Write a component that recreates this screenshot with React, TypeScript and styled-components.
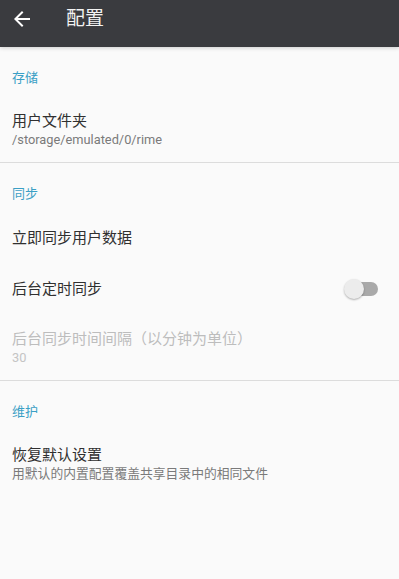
import React from "react";
import styled, { createGlobalStyle } from "styled-components";

const Global = createGlobalStyle`
  html, body { margin: 0; padding: 0; background: #fafafa; }
  body { font-family: Roboto, "Noto Sans CJK SC", sans-serif; -webkit-font-smoothing: antialiased; }
  #root { min-height: 579px; background: #fafafa; }
`;

const Page = styled.div`
  width: 399px;
  min-height: 579px;
  background: #fafafa;
  display: flex;
  flex-direction: column;
`;

const Toolbar = styled.header`
  height: 47px;
  box-sizing: border-box;
  background: #3a3b3f;
  display: flex;
  align-items: flex-start;
  padding: 7px 0 0 10px;
  gap: 32px;
  box-shadow: 0 1px 4px rgba(0, 0, 0, 0.18);
  position: relative;
  z-index: 1;
`;

const BackButton = styled.button`
  width: 24px;
  height: 24px;
  padding: 0;
  border: 0;
  background: none;
  display: flex;
  align-items: center;
  justify-content: center;
  color: #fff;
`;

const Title = styled.h1`
  margin: 0;
  font-size: 19px;
  line-height: 26px;
  font-weight: 400;
  color: #f2f2f2;
  margin-top: -1px;
`;

const List = styled.main`
  display: flex;
  flex-direction: column;
`;

const Category = styled.div`
  padding: 23px 12px 10px;
  font-size: 13px;
  line-height: 16px;
  color: #3a9fc5;
`;

const Item = styled.div<{ $twoLine?: boolean }>`
  box-sizing: border-box;
  display: flex;
  align-items: center;
  justify-content: space-between;
  padding: ${(p) => (p.$twoLine ? "15px 21px 14px 12px" : "0 21px 0 12px")};
  min-height: ${(p) => (p.$twoLine ? "66px" : "51px")};
`;

const TextCol = styled.div`
  display: flex;
  flex-direction: column;
`;

const ItemTitle = styled.div<{ $disabled?: boolean }>`
  font-size: 15px;
  line-height: 20px;
  color: ${(p) => (p.$disabled ? "#bdbdbd" : "#303030")};
`;

const ItemSummary = styled.div<{ $disabled?: boolean }>`
  font-size: 12.8px;
  line-height: 17px;
  color: ${(p) => (p.$disabled ? "#c4c4c4" : "#7a7a7a")};
`;

const Divider = styled.div`
  height: 1px;
  background: #dcdcdc;
`;

const Switch = styled.div`
  position: relative;
  width: 34px;
  height: 20px;
  display: flex;
  align-items: center;
`;

const Track = styled.div`
  width: 32px;
  height: 14px;
  border-radius: 7px;
  background: #a9a9a9;
  margin-left: 3px;
`;

const Thumb = styled.div`
  position: absolute;
  left: 0;
  top: 0;
  width: 20px;
  height: 20px;
  border-radius: 50%;
  background: #ececec;
  box-shadow: 0 1px 2px rgba(0, 0, 0, 0.3);
`;

export default function App() {
  return (
    <Page>
      <Global />
      <Toolbar>
        <BackButton aria-label="back">
          <svg width="24" height="24" viewBox="0 0 24 24" fill="#ffffff">
            <path d="M20 11H7.83l5.59-5.59L12 4l-8 8 8 8 1.41-1.41L7.83 13H20v-2z" />
          </svg>
        </BackButton>
        <Title>配置</Title>
      </Toolbar>
      <List>
        <Category>存储</Category>
        <Item $twoLine>
          <TextCol>
            <ItemTitle>用户文件夹</ItemTitle>
            <ItemSummary>/storage/emulated/0/rime</ItemSummary>
          </TextCol>
        </Item>
        <Divider />
        <Category>同步</Category>
        <Item>
          <ItemTitle>立即同步用户数据</ItemTitle>
        </Item>
        <Item>
          <ItemTitle>后台定时同步</ItemTitle>
          <Switch>
            <Track />
            <Thumb />
          </Switch>
        </Item>
        <Item $twoLine>
          <TextCol>
            <ItemTitle $disabled>后台同步时间间隔（以分钟为单位）</ItemTitle>
            <ItemSummary $disabled>30</ItemSummary>
          </TextCol>
        </Item>
        <Divider />
        <Category>维护</Category>
        <Item $twoLine>
          <TextCol>
            <ItemTitle>恢复默认设置</ItemTitle>
            <ItemSummary>用默认的内置配置覆盖共享目录中的相同文件</ItemSummary>
          </TextCol>
        </Item>
      </List>
    </Page>
  );
}
